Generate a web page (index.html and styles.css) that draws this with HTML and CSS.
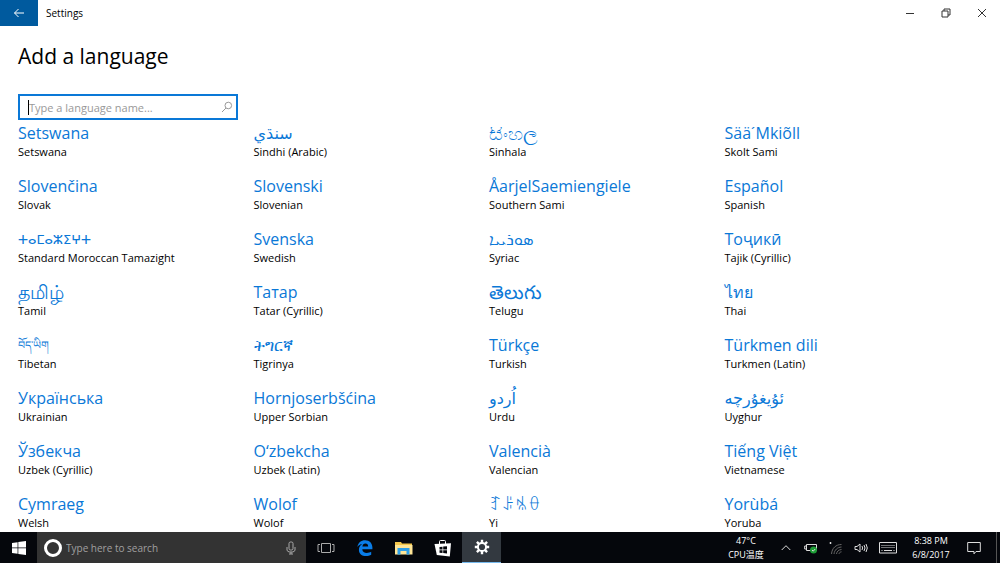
FILE: index.html
```html
<!DOCTYPE html>
<html lang="en">
<head>
<meta charset="utf-8">
<meta name="viewport" content="width=device-width, initial-scale=1">
<title>Settings</title>
<link rel="stylesheet" href="styles.css">
</head>
<body>
<header class="titlebar">
  <button class="back" aria-label="Back"><svg width="12" height="10" viewBox="0 0 12 10"><path d="M11 5H1.5M5.5 1l-4 4 4 4"/></svg></button>
  <span class="app-name">Settings</span>
  <div class="window-controls">
    <button aria-label="Minimize"><svg width="10" height="10" viewBox="0 0 10 10"><path d="M1 5.5h8"/></svg></button>
    <button aria-label="Restore"><svg width="10" height="10" viewBox="0 0 10 10"><path d="M1 3h6v6H1zM3 3V1h6v6H7"/></svg></button>
    <button aria-label="Close"><svg width="10" height="10" viewBox="0 0 10 10"><path d="M1 1l8 8M9 1L1 9"/></svg></button>
  </div>
</header>
<main class="page">
  <h1 class="title">Add a language</h1>
  <div class="search">
    <span class="caret"></span>
    <input class="search-input" type="text" placeholder="Type a language name..." aria-label="Type a language name">
    <svg width="12" height="12" viewBox="0 0 12 12"><circle cx="7.3" cy="4.5" r="3.3"/><path d="M5 7L1 11"/></svg>
  </div>
  <div class="viewport">
    <ul class="languages">
      <li><a class="native" href="#">Setswana</a><span class="english">Setswana</span></li>
      <li><a class="native" href="#" lang="sd">سنڌي</a><span class="english">Sindhi (Arabic)</span></li>
      <li><a class="native large" href="#" lang="si">සිංහල</a><span class="english">Sinhala</span></li>
      <li><a class="native" href="#">Sää´Mǩiõll</a><span class="english">Skolt Sami</span></li>
      <li><a class="native" href="#">Slovenčina</a><span class="english">Slovak</span></li>
      <li><a class="native" href="#">Slovenski</a><span class="english">Slovenian</span></li>
      <li><a class="native" href="#">ÅarjelSaemiengiele</a><span class="english">Southern Sami</span></li>
      <li><a class="native" href="#">Español</a><span class="english">Spanish</span></li>
      <li><a class="native compact" href="#" lang="zgh">ⵜⴰⵎⴰⵣⵉⵖⵜ</a><span class="english">Standard Moroccan Tamazight</span></li>
      <li><a class="native" href="#">Svenska</a><span class="english">Swedish</span></li>
      <li><a class="native" href="#" lang="syr">ܣܘܪܝܝܐ</a><span class="english">Syriac</span></li>
      <li><a class="native" href="#" lang="tg">Тоҷикӣ</a><span class="english">Tajik (Cyrillic)</span></li>
      <li><a class="native large" href="#" lang="ta">தமிழ்</a><span class="english">Tamil</span></li>
      <li><a class="native" href="#" lang="tt">Татар</a><span class="english">Tatar (Cyrillic)</span></li>
      <li><a class="native large" href="#" lang="te">తెలుగు</a><span class="english">Telugu</span></li>
      <li><a class="native" href="#" lang="th">ไทย</a><span class="english">Thai</span></li>
      <li><a class="native small" href="#" lang="bo">བོད་ཡིག</a><span class="english">Tibetan</span></li>
      <li><a class="native" href="#" lang="ti">ትግርኛ</a><span class="english">Tigrinya</span></li>
      <li><a class="native" href="#" lang="tr">Türkçe</a><span class="english">Turkish</span></li>
      <li><a class="native" href="#" lang="tk">Türkmen dili</a><span class="english">Turkmen (Latin)</span></li>
      <li><a class="native" href="#" lang="uk">Українська</a><span class="english">Ukrainian</span></li>
      <li><a class="native" href="#">Hornjoserbšćina</a><span class="english">Upper Sorbian</span></li>
      <li><a class="native" href="#" lang="ur">اُردو</a><span class="english">Urdu</span></li>
      <li><a class="native" href="#" lang="ug">ئۇيغۇرچە</a><span class="english">Uyghur</span></li>
      <li><a class="native" href="#" lang="uz">Ўзбекча</a><span class="english">Uzbek (Cyrillic)</span></li>
      <li><a class="native" href="#">O‘zbekcha</a><span class="english">Uzbek (Latin)</span></li>
      <li><a class="native" href="#">Valencià</a><span class="english">Valencian</span></li>
      <li><a class="native" href="#" lang="vi">Tiếng Việt</a><span class="english">Vietnamese</span></li>
      <li><a class="native" href="#" lang="cy">Cymraeg</a><span class="english">Welsh</span></li>
      <li><a class="native" href="#">Wolof</a><span class="english">Wolof</span></li>
      <li><a class="native" href="#" lang="ii">ꆈꌠꁱꂷ</a><span class="english">Yi</span></li>
      <li><a class="native" href="#">Yorùbá</a><span class="english">Yoruba</span></li>
    </ul>
  </div>
</main>
<footer class="taskbar">
  <button class="start" aria-label="Start"><svg width="14" height="14" viewBox="0 0 14 14"><path d="M0 2l5.6-.8v5.4H0zM6.3 1.1L14 0v6.6H6.3zM0 7.3h5.6v5.4L0 12zM6.3 7.3H14V14l-7.7-1.1z"/></svg></button>
  <div class="cortana">
    <svg class="ring" width="18" height="18" viewBox="0 0 18 18"><circle cx="9" cy="9" r="7.5"/></svg>
    <input class="cortana-input" type="text" placeholder="Type here to search" aria-label="Type here to search">
    <svg class="mic" width="10" height="14" viewBox="0 0 10 14"><rect x="3" y="1" width="4" height="8" rx="1.5"/><path d="M1 6v3.5L3 11h4l2-1.500V6M5 11v2M3 13h4"/></svg>
  </div>
  <button class="task" aria-label="Task View"><svg class="line dim" width="18" height="12" viewBox="0 0 18 12"><path d="M4.500 1.500h9v9h-9zM3 2.500H1v7h2M15 2.500h2v7h-2"/></svg></button>
  <button class="task" aria-label="Microsoft Edge"><svg width="16" height="16" viewBox="0 0 16 16"><path fill="#0a7de8" d="M.4 7.100C1 2.700 4 .2 8.100.2c4.600 0 7.300 3.200 7.300 7.300v1.800H5.300c.1 2.500 2 3.700 4.500 3.700 1.700 0 3.100-.5 4.400-1.200v3C12.800 15.600 11 16 9 16 4.800 16 1.900 13.700 1.900 9.900c0-2.500 1.200-4.500 3.400-5.800C3.300 4.400 1.600 5.400.4 7.100zm5-.5h5.800c0-2-1-3.100-2.700-3.100-1.800 0-2.900 1.200-3.100 3.100z"/></svg></button>
  <button class="task" aria-label="File Explorer"><svg width="18" height="14" viewBox="0 0 18 14"><path fill="#f5c84c" d="M0 1h6l1 1.500h10V13H0z"/><path fill="#ffe596" d="M0 4h17.500v9.500H0z"/><path fill="#2f9fe8" d="M2.500 7h12v6.500h-3v-3.500h-6v3.500h-3z"/></svg></button>
  <button class="task" aria-label="Store"><svg width="18" height="18" viewBox="0 0 18 18"><path fill="none" stroke="#fff" d="M5.500 5V2.500q0-1 1-1h4q1 0 1 1V5"/><path fill="#fff" d="M.5 5L17 4.200 15.800 17.500l-13-1.500z"/><path fill="#05070c" d="M5.500 8l3-.3v2.800h-3zM9.200 7.600l3.800-.4v3.300H9.200zM5.500 11.200h3V14l-3-.3zM9.200 11.200H13v3.300l-3.800-.4z"/></svg></button>
  <button class="task active" aria-label="Settings"><svg width="16" height="16" viewBox="0 0 16 16"><g stroke="#fff" stroke-width="2.400"><path d="M8 .8v14.400M.8 8h14.400M2.900 2.900l10.200 10.200M13.100 2.900L2.900 13.100"/></g><circle cx="8" cy="8" r="4.100" fill="#333940" stroke="#fff" stroke-width="2"/></svg></button>
  <div class="tray">
    <div class="readout cpu"><span>47°C</span><span lang="zh-CN">CPU温度</span></div>
    <button aria-label="Show hidden icons"><svg class="line" width="10" height="8" viewBox="0 0 10 8"><path d="M.7 6L5 1.700 9.300 6"/></svg></button>
    <button aria-label="Battery"><svg class="line" width="14" height="12" viewBox="0 0 14 12"><path d="M2.500 2.500h10v6h-10zM2 4H.7v3H2"/><circle cx="9.500" cy="8" r="3.500" fill="#1d9e36" stroke="none"/><path d="M8 8l1.200 1.200L11.200 7"/></svg></button>
    <button aria-label="Network"><svg class="line" width="14" height="14" viewBox="0 0 14 14"><path fill="#fff" d="M1 1.500h1V2.500H1z"/><g stroke="#666"><path d="M2.500 13C3 7 7 3.500 12.500 3.500M5 13c.4-4 3.500-6.800 7.500-7M7.500 13c.3-2.600 2.200-4.300 5-4.500M10 13c.2-1.200 1-2 2.500-2.200"/></g></svg></button>
    <button aria-label="Volume"><svg class="line" width="14" height="12" viewBox="0 0 14 12"><path d="M1 4.500h2L6 2v8L3 7.500H1zM8 4q1.200 2 0 4M10 3q2 3 0 6M12 2q2.600 4 0 8"/></svg></button>
    <button class="keyboard" aria-label="Touch keyboard"><svg class="line" width="18" height="12" viewBox="0 0 18 12"><path d="M.5.500h17v10.500H.500z"/><path stroke-dasharray="1 1" d="M2.500 3.500h13M2.500 5.500h13"/><path d="M2.500 8.500h1M5 8.500h8M14.500 8.500h1"/></svg></button>
    <div class="readout clock"><span>8:38 PM</span><span>6/8/2017</span></div>
    <button class="notifications" aria-label="Notifications"><svg class="line" width="14" height="14" viewBox="0 0 14 14"><path d="M.7 1.500h12.600v9H9L7 12.800V10.500H.7z"/></svg></button>
  </div>
  <button class="show-desktop" aria-label="Show desktop"></button>
</footer>
</body>
</html>
```
FILE: styles.css
```css
* { box-sizing: border-box; }
body {
  margin: 0;
  height: 100vh;
  display: flex;
  flex-direction: column;
  overflow: hidden;
  background: #fff;
  color: #000;
  font: 11px/16px "Open Sans", "Noto Sans", "DejaVu Sans", "Noto Sans CJK SC", sans-serif;
}
button { border: 0; padding: 0; background: none; display: flex; align-items: center; justify-content: center; }
svg { display: block; flex: none; fill: none; }
input { border: 0; padding: 0; outline: 0; background: none; font: inherit; min-width: 0; flex: 1; }

.titlebar { display: flex; align-items: stretch; height: 26px; flex: none; }
.back { width: 38px; background: #005a9e; }
.back svg { stroke: #fff; }
.app-name { margin-left: 8px; font-size: 10px; line-height: 26px; }
.window-controls { display: flex; margin-left: auto; }
.window-controls button { width: 36px; }
.window-controls svg { stroke: #333; }

.page { flex: 1; min-height: 0; display: flex; flex-direction: column; }
.title { margin: 15px 18px 23px; font-size: 21px; line-height: 30px; font-weight: 400; }
.search { display: flex; align-items: center; flex: none; width: 220px; height: 26px; margin-left: 18px; padding: 0 3px 0 8px; border: 2px solid #0a78d7; }
.caret { width: 1px; height: 15px; background: #000; }
.search-input { height: 20px; }
.search-input::placeholder { color: #999; opacity: 1; }
.search svg { stroke: #999; }

.viewport { flex: 1; min-height: 0; margin-top: 7px; overflow: hidden; }
.languages { list-style: none; margin: -5px 0 0; padding: 0 40px 0 18px; display: grid; grid-template-columns: repeat(4, 1fr); grid-auto-rows: 53px; }
.languages li { display: flex; flex-direction: column; align-items: flex-start; }
.native { height: 22px; font-size: 16px; line-height: 22px; color: #0a78d7; text-decoration: none; white-space: nowrap; }
.large { font-size: 19px; }
.compact { font-size: 13px; }
.small { font-size: 11px; }

.taskbar { display: flex; flex: none; height: 31px; background: #05070c; color: #fff; }
.start { width: 37px; }
.start svg { fill: #fff; }
.cortana { display: flex; align-items: center; width: 269px; padding: 0 10px 0 7px; background: #333; }
.ring { stroke: #fff; stroke-width: 3; }
.cortana-input { margin-left: 4px; color: #fff; font-size: 10px; }
.cortana-input::placeholder { color: #a0a0a0; opacity: 1; }
.mic { stroke: #aaa; }
.task { width: 39px; }
.active { background: #333940; border-bottom: 1px solid #76b9ed; }
.line { stroke: #ddd; }
.dim { stroke: #aaa; }
.tray { display: flex; align-items: center; margin-left: auto; }
.tray button { width: 25px; height: 100%; }
.tray .keyboard { width: 30px; }
.tray .notifications { width: 30px; margin-right: 7px; }
.readout { display: flex; flex-direction: column; text-align: center; font-size: 9px; line-height: 14px; }
.cpu { width: 54px; }
.clock { width: 56px; }
.show-desktop { width: 4px; border-left: 1px solid #555; }
```
